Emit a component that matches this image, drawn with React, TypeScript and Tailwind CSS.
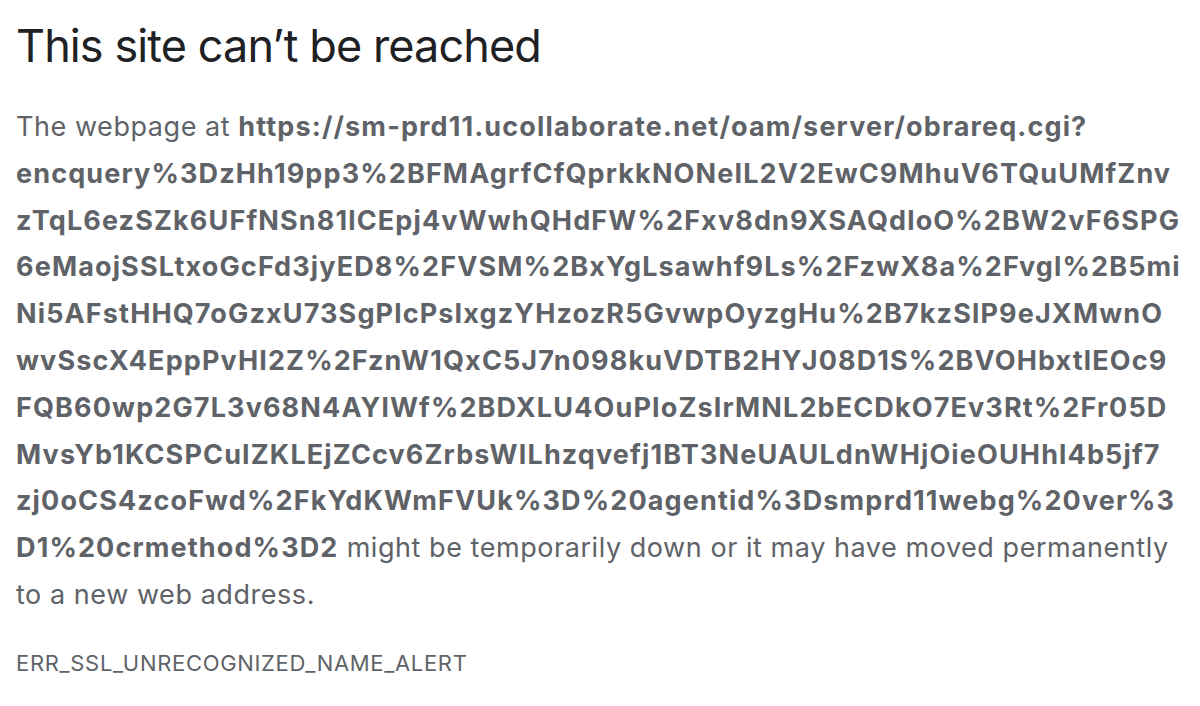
import React from 'react';

const urlLines = [
  'https://sm-prd11.ucollaborate.net/oam/server/obrareq.cgi?',
  'encquery%3DzHh19pp3%2BFMAgrfCfQprkkNONeIL2V2EwC9MhuV6TQuUMfZnv',
  'zTqL6ezSZk6UFfNSn81lCEpj4vWwhQHdFW%2Fxv8dn9XSAQdloO%2BW2vF6SPG',
  '6eMaojSSLtxoGcFd3jyED8%2FVSM%2BxYgLsawhf9Ls%2FzwX8a%2Fvgl%2B5mi',
  'Ni5AFstHHQ7oGzxU73SgPlcPsIxgzYHzozR5GvwpOyzgHu%2B7kzSlP9eJXMwnO',
  'wvSscX4EppPvHI2Z%2FznW1QxC5J7n098kuVDTB2HYJ08D1S%2BVOHbxtlEOc9',
  'FQB60wp2G7L3v68N4AYlWf%2BDXLU4OuPIoZsIrMNL2bECDkO7Ev3Rt%2Fr05D',
  'MvsYb1KCSPCuIZKLEjZCcv6ZrbsWILhzqvefj1BT3NeUAULdnWHjOieOUHhl4b5jf7',
  'zj0oCS4zcoFwd%2FkYdKWmFVUk%3D%20agentid%3Dsmprd11webg%20ver%3',
];

export default function App() {
  return (
    <div className="w-[1200px] h-[706px] bg-white px-4 pt-[18px] overflow-hidden" style={{ fontFamily: 'Inter, "Liberation Sans", sans-serif' }}>
      <h1 className="text-[45px] leading-[56px] tracking-[-0.9px] text-[#202124] font-normal">This site can’t be reached</h1>
      <p className="mt-[30px] text-[27px] leading-[46.8px] tracking-[0.55px] text-[#5f6368] whitespace-nowrap">
        The webpage at <b className="font-bold tracking-[1.13px]">{urlLines[0]}</b>
        {urlLines.slice(1).map((l) => (
          <React.Fragment key={l}>
            <br />
            <b className="font-bold tracking-[1.13px]">{l}</b>
          </React.Fragment>
        ))}
        <br />
        <b className="font-bold tracking-[1.13px]">D1%20crmethod%3D2</b> might be temporarily down or it may have moved permanently
        <br />
        to a new web address.
      </p>
      <div className="mt-[30px] text-[22px] leading-[28px] tracking-[0.68px] text-[#5f6368]">ERR_SSL_UNRECOGNIZED_NAME_ALERT</div>
    </div>
  );
}
